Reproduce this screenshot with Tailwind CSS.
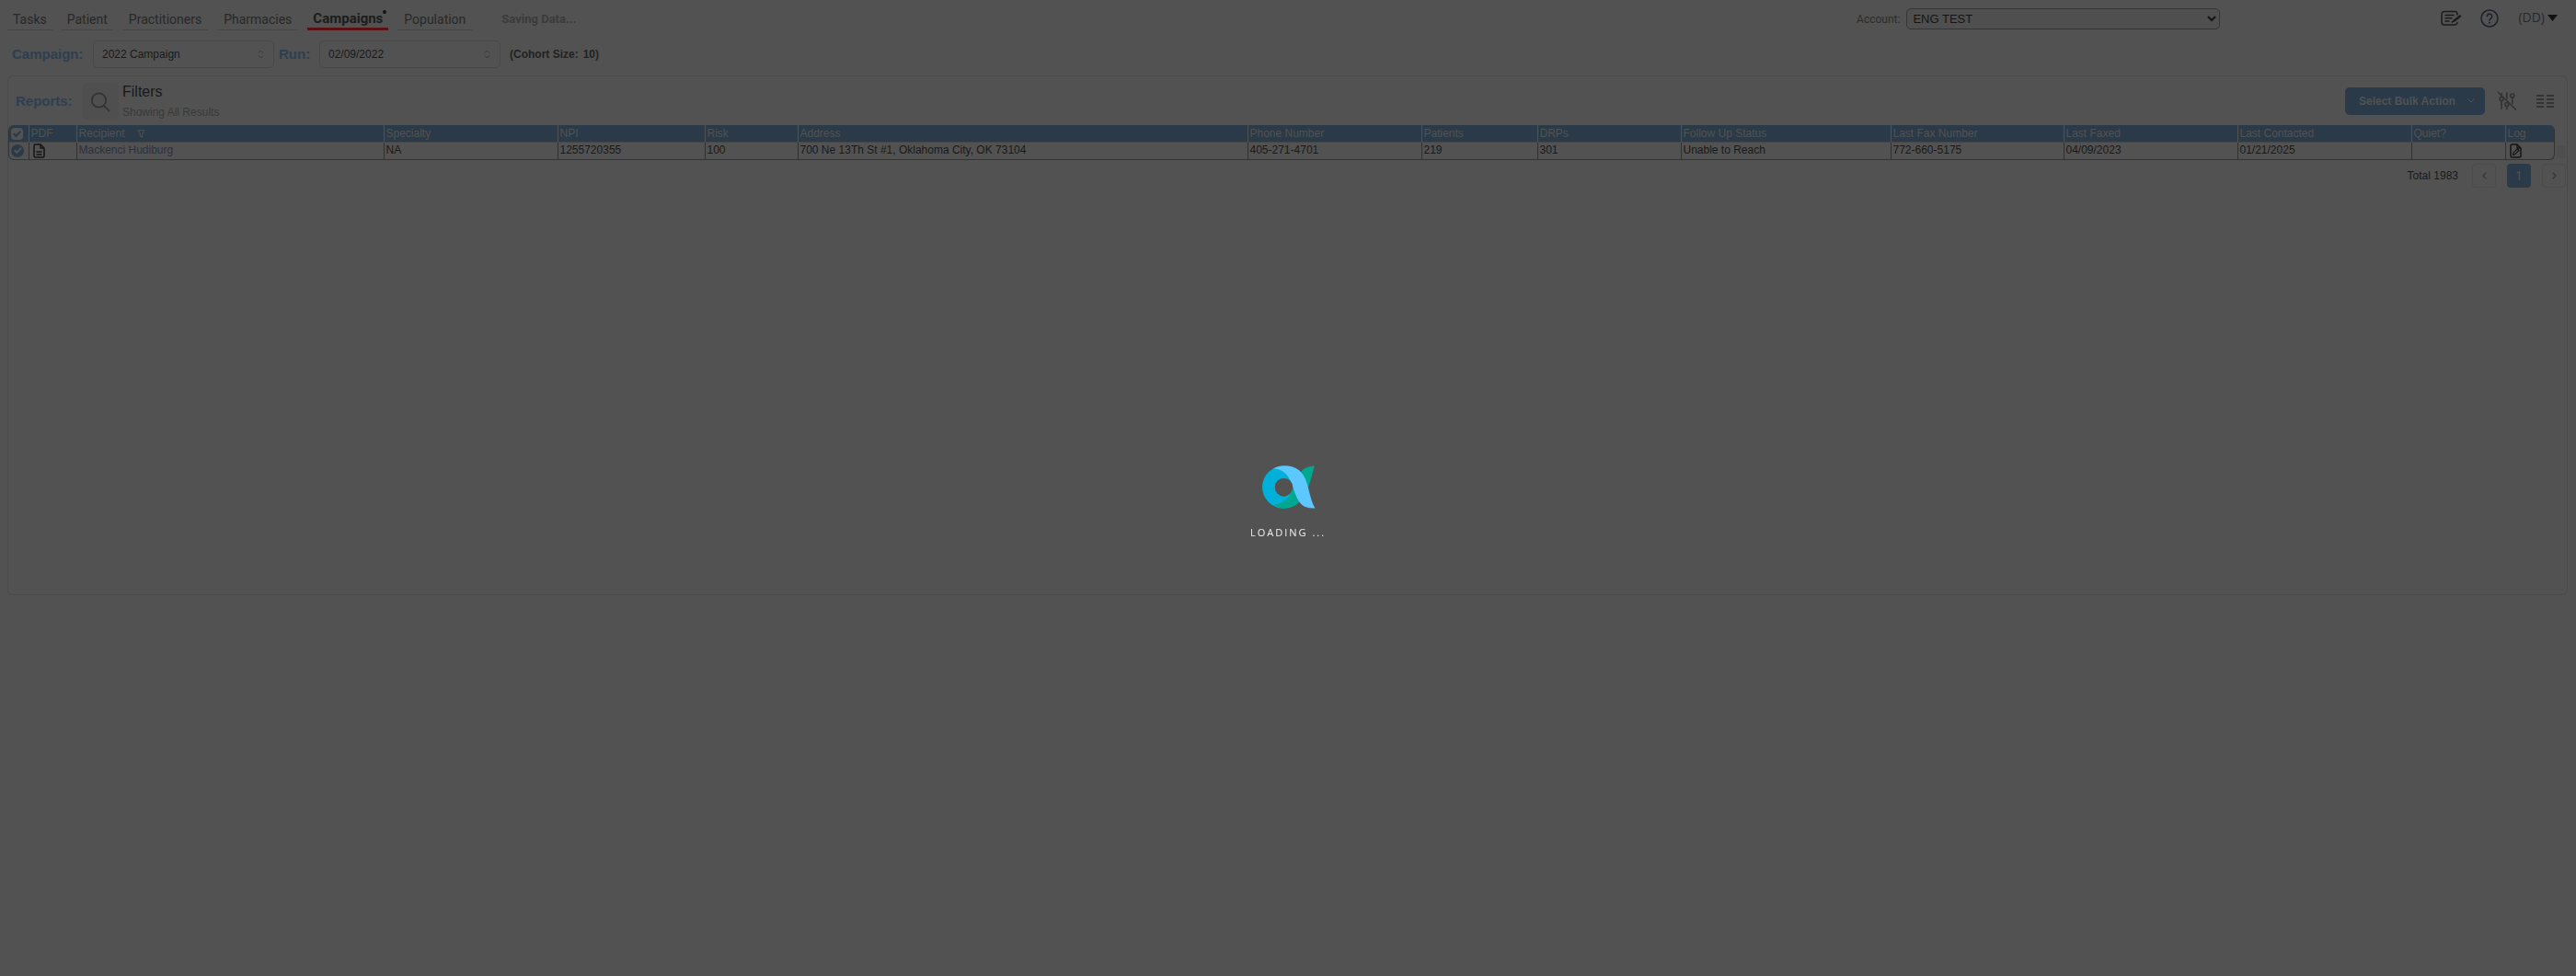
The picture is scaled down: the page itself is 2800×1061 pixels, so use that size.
<!DOCTYPE html>
<html lang="en">
<head>
<meta charset="utf-8">
<title>Campaigns</title>
<script src="https://cdn.jsdelivr.net/npm/@tailwindcss/browser@4"></script>
</head>
<body class="min-h-screen bg-[#525252] font-['Liberation_Sans',sans-serif] text-xs text-[#191919]">

<header class="flex h-10 items-start pl-2 pr-5">
  <nav class="flex gap-[10px] pt-[9px] font-['Roboto',sans-serif] text-sm text-[#282828]">
    <a href="#" class="h-6 border-b border-[#454545] px-[6px] leading-6">Tasks</a>
    <a href="#" class="h-6 border-b border-[#454545] px-[6px] leading-6">Patient</a>
    <a href="#" class="h-6 border-b border-[#454545] px-[7px] leading-6">Practitioners</a>
    <a href="#" class="h-6 border-b border-[#454545] px-[7px] leading-6">Pharmacies</a>
    <a href="#" class="relative h-6 border-b-3 border-[#5c1012] px-[6px] text-[15px] font-bold leading-[22px] text-[#1c1c1c]">Campaigns<span class="absolute right-[2px] top-[2px] size-1 rounded-full bg-[#151515]"></span></a>
    <a href="#" class="h-6 border-b border-[#454545] px-[7px] leading-6">Population</a>
  </nav>
  <p class="ml-8 pt-[9px] font-['Roboto',sans-serif] text-[13px] font-bold leading-6 text-[#3b3b3b]">Saving Data...</p>

  <div class="ml-auto flex items-center pt-[9px]">
    <label for="account" class="mr-[7px] font-['Roboto',sans-serif] text-xs text-[#2c2c2c]">Account:</label>
    <select id="account" class="h-[23px] w-[341px] rounded-[5px] border border-[#353535] bg-[#4f4f4f] px-[2px] text-[13px] text-[#141414]">
      <option>ENG TEST</option>
    </select>
  </div>
  <div class="ml-[240px] flex items-start pt-[10px]">
    <button aria-label="Notes" class="mt-[1px]">
      <svg class="h-[18px] w-[23px]" viewBox="0 0 23 18" fill="none" stroke="#1b1b1b" stroke-width="1.5" stroke-linecap="round" stroke-linejoin="round">
        <path d="M18 5V4.500A3 3 0 0 0 15 1.500H4A3 3 0 0 0 1 4.500v8.500a3 3 0 0 0 3 3h11a3 3 0 0 0 3-2.500"/>
        <path d="M5 5.500h9M5 8.700h7M5 12h4"/>
        <path d="M21 6.500l-6.500 5" stroke-width="2.400"/><path d="M13.800 12.200l-1.600.8"/>
      </svg>
    </button>
    <button aria-label="Help" class="ml-5">
      <svg class="size-5" viewBox="0 0 20 20" fill="none" stroke="#1b2028" stroke-width="1.500" stroke-linecap="round">
        <circle cx="10" cy="10" r="9"/><path d="M7.300 7.800a2.700 2.700 0 1 1 4.300 2.200c-1 .7-1.600 1.100-1.600 2.100"/><path d="M10 14.600v.2" stroke-width="1.900"/>
      </svg>
    </button>
    <button class="ml-[21px] flex items-center gap-[3px] font-['Open_Sans',sans-serif] text-sm leading-[18px] text-[#282828]">(DD)
      <svg class="h-[7px] w-[11px]" viewBox="0 0 11 7" fill="#111"><path d="M0 0h11L5.500 7z"/></svg>
    </button>
  </div>
</header>

<section class="flex h-[38px] items-center pb-0 pl-[13px] [&>label]:text-[15px] [&>label]:font-bold [&>label]:text-[#2d3f50]">
  <label for="campaign" class="w-[88px]">Campaign:</label>
  <span class="grid w-[197px] items-center">
    <select id="campaign" class="col-start-1 row-start-1 h-[30px] appearance-none rounded-[5px] border border-[#484848] pl-[9px]"><option>2022 Campaign</option></select>
    <svg class="pointer-events-none col-start-1 row-start-1 mr-[11px] h-[10px] w-[7px] justify-self-end" viewBox="0 0 7 10" fill="none" stroke="#373737"><path d="M1 3.500L3.500 1 6 3.500M1 6.500L3.500 9 6 6.500"/></svg>
  </span>
  <label for="run" class="ml-[5px] w-11">Run:</label>
  <span class="grid w-[197px] items-center">
    <select id="run" class="col-start-1 row-start-1 h-[30px] appearance-none rounded-[5px] border border-[#484848] pl-[9px]"><option>02/09/2022</option></select>
    <svg class="pointer-events-none col-start-1 row-start-1 mr-[11px] h-[10px] w-[7px] justify-self-end" viewBox="0 0 7 10" fill="none" stroke="#373737"><path d="M1 3.500L3.500 1 6 3.500M1 6.500L3.500 9 6 6.500"/></svg>
  </span>
  <p class="ml-[10px] flex gap-[5px] font-bold text-[#222]"><span>(Cohort Size:</span><span>10)</span></p>
</section>

<main class="ml-2 mr-[9px] mt-1 min-h-[565px] rounded-md border border-[#4a4a4a]">
  <div class="flex h-[53px] items-center pl-2 pr-[14px]">
    <h2 class="w-[72px] text-[15px] font-bold text-[#2d3f50]">Reports:</h2>
    <button aria-label="Search" class="grid h-10 w-10 place-items-center rounded-md bg-[#4f4f4f]">
      <svg class="mt-[2px] size-[22px]" viewBox="0 0 22 22" fill="none" stroke="#333" stroke-width="1.800" stroke-linecap="round"><circle cx="9.500" cy="9" r="7.700"/><path d="M15 14.800L20.500 20.500"/></svg>
    </button>
    <div class="ml-1 flex flex-col gap-1">
      <h3 class="text-base leading-5">Filters</h3>
      <p class="leading-4 text-[#393939]">Showing All Results</p>
    </div>
    <button class="ml-auto flex h-[30px] w-[152px] items-center rounded-[5px] bg-[#2a3a48] pl-[15px] font-bold text-[#525252]">Select Bulk Action
      <svg class="ml-[13px] h-[5px] w-2" viewBox="0 0 8 5" fill="none" stroke="#525252"><path d="M.5.500L4 4 7.500.500"/></svg>
    </button>
    <button aria-label="Clear filters" class="ml-[13px]">
      <svg class="size-[22px]" viewBox="0 0 22 22" fill="none" stroke="#343434" stroke-width="1.700" stroke-linecap="round">
        <path d="M1.500 1.500l19 18.500"/><circle cx="5" cy="8.500" r="2"/><path d="M5 11v8M10.800 2v6"/><circle cx="10.800" cy="14.500" r="2"/><path d="M10.800 17v2.500"/><circle cx="16.800" cy="5" r="2"/><path d="M16.800 7.500v6M5 2.500v3"/>
      </svg>
    </button>
    <button aria-label="Columns" class="ml-[21px]">
      <svg class="h-4 w-[19px]" viewBox="0 0 19 16" stroke="#343434" stroke-width="2"><path d="M0 2h8M11 2h8M0 6h8M11 6h8M0 10h8M11 10h8M0 14h8M11 14h8"/></svg>
    </button>
  </div>

  <div class="flex items-end pr-[1px]">
    <div class="min-w-0 flex-1 overflow-hidden rounded-md border border-t-0 border-[#333]">
      <table class="w-full table-fixed border-collapse text-left whitespace-nowrap [&_td]:border-l [&_td]:border-[#303030] [&_td]:pl-[2px] [&_td:first-child]:border-l-0 [&_th]:border-l [&_th]:border-[#525252] [&_th]:pl-[2px] [&_th]:font-normal [&_th:first-child]:border-l-0">
        <colgroup>
          <col class="w-[21px]"><col class="w-[52px]"><col class="w-[334px]"><col class="w-[189px]"><col class="w-[160px]"><col class="w-[101px]"><col><col class="w-[189px]"><col class="w-[126px]"><col class="w-[156px]"><col class="w-[228px]"><col class="w-[188px]"><col class="w-[189px]"><col class="w-[189px]"><col class="w-[102px]"><col class="w-[53px]">
        </colgroup>
        <thead class="bg-[#2a3a48] text-[#525252]">
          <tr class="h-[18px] border-b border-[#454545] leading-[18px]">
            <th>
              <label class="grid size-[13px] place-items-center">
                <input type="checkbox" checked aria-label="Select all" class="col-start-1 row-start-1 size-[13px] appearance-none rounded-[4px] bg-[#525252]">
                <svg class="pointer-events-none col-start-1 row-start-1 h-[7px] w-[9px]" viewBox="0 0 9 7" fill="none" stroke="#2a3a48" stroke-width="2"><path d="M.7 3.300L3.300 5.800 8.300.800"/></svg>
              </label>
            </th>
            <th>PDF</th>
            <th><span class="flex items-center gap-[13px]">Recipient
              <svg class="h-[9px] w-[9px]" viewBox="0 0 9 9" fill="none" stroke="#525252"><path d="M.8.700h7.400L5.700 4v4.300L3.300 7V4z"/></svg></span></th>
            <th>Specialty</th><th>NPI</th><th>Risk</th><th>Address</th><th>Phone Number</th><th>Patients</th><th>DRPs</th><th>Follow Up Status</th><th>Last Fax Number</th><th>Last Faxed</th><th>Last Contacted</th><th>Quiet?</th><th>Log</th>
          </tr>
        </thead>
        <tbody>
          <tr class="h-[18px] leading-[17px]">
            <td>
              <label class="grid size-[14px] place-items-center">
                <input type="checkbox" checked aria-label="Select row" class="col-start-1 row-start-1 size-[14px] appearance-none rounded-full bg-[#2a3a48]">
                <svg class="pointer-events-none col-start-1 row-start-1 h-[7px] w-[9px]" viewBox="0 0 9 7" fill="none" stroke="#525252" stroke-width="2"><path d="M.7 3.300L3.300 5.800 8.300.800"/></svg>
              </label>
            </td>
            <td>
              <button aria-label="Open PDF" class="ml-[2px] block">
                <svg class="h-4 w-[13px]" viewBox="0 0 13 16" fill="none" stroke="#141414" stroke-width="1.500" stroke-linejoin="round"><path d="M2.500 1H8l4 4v8.500a1.500 1.500 0 0 1-1.500 1.500h-8A1.500 1.500 0 0 1 1 13.500v-11A1.500 1.500 0 0 1 2.500 1z"/><path d="M8 1v4h4M3.500 9h6M3.500 12h6"/></svg>
              </button>
            </td>
            <td><a href="#" class="text-[#2b3040]">Mackenci Hudiburg</a></td>
            <td>NA</td><td>1255720355</td><td>100</td><td>700 Ne 13Th St #1, Oklahoma City, OK 73104</td><td>405-271-4701</td><td>219</td><td>301</td><td>Unable to Reach</td><td>772-660-5175</td><td>04/09/2023</td><td>01/21/2025</td><td></td>
            <td>
              <button aria-label="Open log" class="ml-[2px] block">
                <svg class="h-4 w-[13px]" viewBox="0 0 13 16" fill="none" stroke="#141414" stroke-width="1.500" stroke-linejoin="round"><path d="M2.500 1H8l4 4v8.500a1.500 1.500 0 0 1-1.500 1.500h-8A1.500 1.500 0 0 1 1 13.500v-11A1.500 1.500 0 0 1 2.500 1z"/><path d="M8 1v4h4"/><path d="M3.500 12.500l.6-2.600 4.200-4 1.600 1.600-4 4.200z" stroke-width="1.200"/></svg>
              </button>
            </td>
          </tr>
        </tbody>
      </table>
    </div>
    <div class="mb-[2px] ml-[2px] h-[14px] w-[10px] bg-[#4e4e4e]"></div>
  </div>

  <div class="flex items-center justify-end pr-[1px] pt-1">
    <p class="mr-[15px]">Total 1983</p>
    <button aria-label="Previous page" class="mr-3 grid size-[26px] place-items-center rounded border border-[#4c4c4c]">
      <svg class="h-2 w-[5px]" viewBox="0 0 5 8" fill="none" stroke="#343434" stroke-width="1.200"><path d="M4.300.700L1 4l3.300 3.300"/></svg>
    </button>
    <button class="mr-3 size-[26px] rounded bg-[#2a3a48] font-['Open_Sans',sans-serif] text-sm text-[#525252]">1</button>
    <button aria-label="Next page" class="grid size-[26px] place-items-center rounded border border-[#4c4c4c]">
      <svg class="h-2 w-[5px]" viewBox="0 0 5 8" fill="none" stroke="#343434" stroke-width="1.200"><path d="M.7.700L4 4 .7 7.300"/></svg>
    </button>
  </div>
</main>

<div role="status" class="pointer-events-none fixed inset-0 flex flex-col items-center justify-center pt-[34px] font-['Open_Sans',sans-serif]">
  <svg class="h-[47px] w-[59px]" viewBox="0 0 59 47">
    <path d="M58 .5C49 1 45 4 41 9L31 26C28 36 22 43 14 44c3 2 7 2.500 11 2.500C38 46 45 38 50 26 54 17 55 9 58 .5z" fill="#00a88f"/>
    <path d="M24 .5a23 23 0 1 0 0 46C36 46.500 42 38 42 23.500S36 .500 24 .5zM24.500 14a9.700 9.700 0 1 1 0 19.400 9.700 9.700 0 0 1 0-19.400z" fill="#00b0d8" fill-rule="evenodd"/>
    <path d="M34 20c1 9-5 21-21 23 3 2 7 3.500 12 3.500 7 0 13-3 16-7z" fill="#00a88f"/>
    <path d="M13 3.500C17 1 21 .3 25 .3 38 .3 46 7 49.500 19 53 31 54 39 58.500 46.500 46 47 41 42 37 31 33 20 30 4 13 3.500z" fill="#5cc8ff"/>
    <circle cx="24.500" cy="23.700" r="9.700" fill="#525252"/>
  </svg>
  <p class="mt-4 text-[11px] leading-5 tracking-[2px] text-[#f0f0f0]">LOADING ...</p>
</div>
</body>
</html>
